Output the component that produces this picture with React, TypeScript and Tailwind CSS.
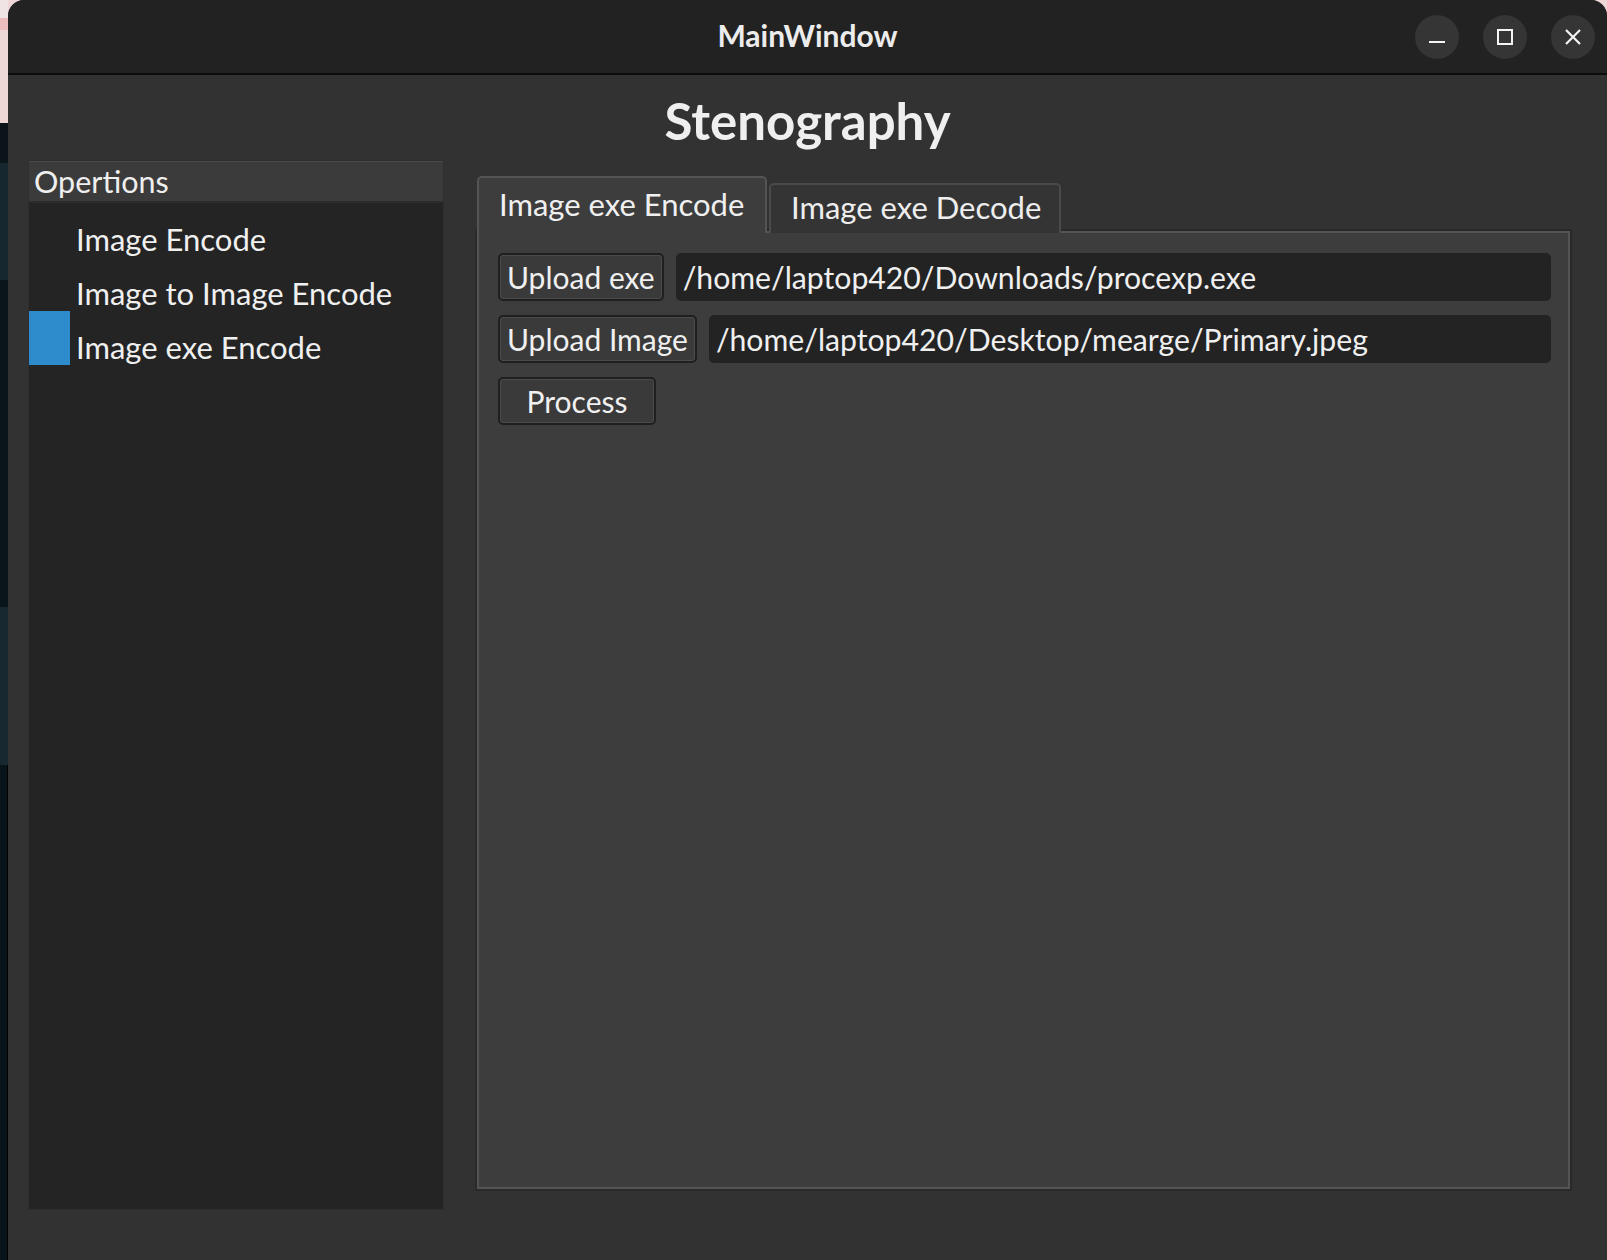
import React from "react";

const sideItems = ["Image Encode", "Image to Image Encode", "Image exe Encode"];

const DesktopStrip: React.FC = () => (
  <div className="w-[8px] shrink-0 flex flex-col">
    <div className="h-[18px] bg-[#f1e4e4]" />
    <div className="h-[12px] bg-[#ecbdbd]" />
    <div className="h-[93px] bg-[#eed7d7]" />
    <div className="h-[40px] bg-[#0b1519]" />
    <div className="h-[117px] bg-[#172730]" />
    <div className="h-[327px] bg-[#0a151a]" />
    <div className="h-[158px] bg-[#182831]" />
    <div className="flex-1 bg-[#09141a] border-r border-black" />
  </div>
);

const TitleBar: React.FC = () => (
  <div className="h-[73px] bg-[#222222] grid grid-cols-[1fr_auto_1fr] items-center">
    <div />
    <span className="pb-[4px] text-[30px] font-bold text-[#ececec] leading-none">MainWindow</span>
    <div className="flex justify-end gap-[24px] pr-[12px]">
      {/* minimize */}
      <button className="w-[44px] h-[44px] rounded-full bg-[#353535] flex items-center justify-center">
        <svg width="20" height="20" viewBox="0 0 20 20" fill="none">
          <path d="M2 15h16" stroke="#f4f4f4" strokeWidth="2" />
        </svg>
      </button>
      {/* maximize */}
      <button className="w-[44px] h-[44px] rounded-full bg-[#353535] flex items-center justify-center">
        <svg width="20" height="20" viewBox="0 0 20 20" fill="none">
          <rect x="3" y="3" width="14" height="14" stroke="#f4f4f4" strokeWidth="2" />
        </svg>
      </button>
      {/* close */}
      <button className="w-[44px] h-[44px] rounded-full bg-[#353535] flex items-center justify-center">
        <svg width="20" height="20" viewBox="0 0 20 20" fill="none">
          <path d="M3 3l14 14M17 3L3 17" stroke="#f4f4f4" strokeWidth="2.2" />
        </svg>
      </button>
    </div>
  </div>
);

const Sidebar: React.FC = () => (
  <div className="w-[416px] shrink-0 flex flex-col bg-[#242424] border border-[#2e2e2e]">
    <div className="h-[42px] shrink-0 flex items-center pl-[5px] bg-[#3b3b3b] border-t border-t-[#4a4a4a] border-b-2 border-b-[#2c2c2c] text-[30.5px] text-[#efefef]">
      Opertions
    </div>
    <div className="flex flex-col">
      {sideItems.map((item, i) => (
        <div key={item} className="h-[54px] flex items-center">
          <div className={`w-[41px] h-[54px] shrink-0 ${i === 2 ? "bg-[#2f8ccc]" : ""}`} />
          <span className="ml-[6px] pt-[18px] text-[31px] text-[#f0f0f0] leading-none">{item}</span>
        </div>
      ))}
    </div>
  </div>
);

const Btn: React.FC<{ label: string }> = ({ label }) => (
  <button className="h-[48px] min-w-[158px] px-[7px] shrink-0 flex items-center justify-center rounded-[5px] bg-[#3a3a3a] border-2 border-[#1f1f1f] shadow-[inset_0_0_0_1px_#4b4b4b] text-[30px] text-[#f0f0f0] leading-none">
    {label}
  </button>
);

const PathField: React.FC<{ value: string }> = ({ value }) => (
  <div className="flex-1 h-[48px] flex items-center px-[7px] rounded-[5px] bg-[#232323] text-[30.2px] text-[#f0f0f0] leading-none">
    {value}
  </div>
);

const TabWidget: React.FC = () => (
  <div className="flex-1 flex flex-col mt-[18px] mb-[21px]">
    <div className="h-[55px] flex items-end gap-[2px] relative z-10 -mb-[2px]">
      <div className="w-[290px] h-[57px] flex items-center pl-[20px] pb-[2px] bg-[#3d3d3d] border-2 border-b-0 border-[#545454] rounded-t-[5px] text-[31px] text-[#f0f0f0] leading-none">
        Image exe Encode
      </div>
      <div className="w-[292px] h-[50px] flex items-center pl-[20px] pb-[3px] bg-[#343434] border-2 border-b-0 border-[#4a4a4a] rounded-t-[5px] text-[31px] text-[#eeeeee] leading-none">
        Image exe Decode
      </div>
    </div>
    <div className="flex-1 flex flex-col gap-[14px] pt-[20px] pl-[19px] pr-[17px] bg-[#3d3d3d] border-2 border-[#545454] shadow-[0_0_0_2px_#2a2a2a]">
      <div className="flex gap-[12px]">
        <Btn label="Upload exe" />
        <PathField value="/home/laptop420/Downloads/procexp.exe" />
      </div>
      <div className="flex gap-[12px]">
        <Btn label="Upload Image" />
        <PathField value="/home/laptop420/Desktop/mearge/Primary.jpeg" />
      </div>
      <div className="flex">
        <Btn label="Process" />
      </div>
    </div>
  </div>
);

export default function App() {
  return (
    <div className="w-[1607px] h-[1260px] flex overflow-hidden bg-[linear-gradient(to_bottom,#eed7d7_0px,#eed7d7_123px,#0a151a_123px)] font-['Lato',sans-serif]">
      <DesktopStrip />
      <div className="flex-1 flex flex-col rounded-t-[16px] overflow-hidden bg-[#323232]">
        <TitleBar />
        <div className="h-[2px] bg-[#0c0c0c]" />
        <div className="h-[85px] flex items-center justify-center pt-[6px]">
          <h1 className="text-[51px] font-bold text-[#efefef] leading-none">Stenography</h1>
        </div>
        <div className="flex-1 flex pl-[20px] pr-[37px] pb-[50px] gap-[33px]">
          <Sidebar />
          <TabWidget />
        </div>
      </div>
    </div>
  );
}
